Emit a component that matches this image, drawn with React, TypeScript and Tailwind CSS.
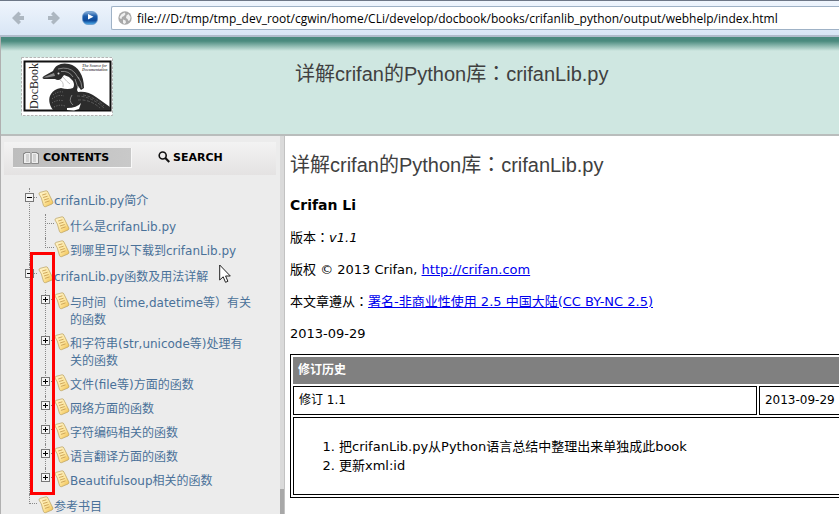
import type { ReactNode } from 'react';

const verdana = "font-['DejaVu_Sans','Noto_Sans_CJK_SC',sans-serif]";

function Colon() {
  return <span lang="zh-TW" className="font-['Noto_Sans_CJK_TC',sans-serif] leading-none">：</span>;
}

function Arrow({ flip = false }: { flip?: boolean }) {
  return (
    <svg viewBox="0 0 12 14" className={flip ? 'h-[14px] w-3 rotate-180' : 'h-[14px] w-3'} aria-hidden="true">
      <path d="M0 7 6.500.5 9 3 7.200 5H12v4H7.200L9 11l-2.500 2.500Z" fill="#adb7c1" />
    </svg>
  );
}

function PlayIcon() {
  return (
    <svg viewBox="0 0 16 14" className="h-[14px] w-4" aria-hidden="true">
      <defs>
        <linearGradient id="play" x1="0" y1="0" x2="0" y2="1">
          <stop offset="0" stopColor="#8fb4dc" />
          <stop offset="0.35" stopColor="#1c5cab" />
          <stop offset="0.7" stopColor="#0e4b9b" />
          <stop offset="1" stopColor="#4fb0ee" />
        </linearGradient>
      </defs>
      <rect x="0.5" y="0.5" width="15" height="13" rx="5.5" fill="url(#play)" stroke="#5f8fc4" strokeWidth="0.7" />
      <path d="M6 3 11.500 5.800 6 8.600Z" fill="#fff" />
    </svg>
  );
}

function GlobeIcon() {
  return (
    <svg viewBox="0 0 14 14" className="h-[14px] w-[14px] shrink-0" aria-hidden="true">
      <circle cx="7" cy="7" r="6.7" fill="#a9a9a9" />
      <path d="M1.500 6 3.500 3.200 6.500 1.500 7.500 3 6 5 4 6 3.500 8 2 7.500ZM8.500 4.500 10.500 3 12.500 6 12 9 10.500 10 9.500 8 8 7ZM5 8.500 7.500 9.500 8 11.500 6.500 13 5 12Z" fill="#f0f0f0" />
    </svg>
  );
}

function PageIcon() {
  return (
    <svg viewBox="0 0 16 18" className="mt-[2px] -mb-[2px] h-[18px] w-4 shrink-0" aria-hidden="true">
      <defs>
        <linearGradient id="page" x1="0" y1="0" x2="1" y2="1">
          <stop offset="0" stopColor="#fff5cf" />
          <stop offset="0.55" stopColor="#fde69f" />
          <stop offset="1" stopColor="#f0bb45" />
        </linearGradient>
      </defs>
      <path d="M1 4Q.8 2.800 2 2.400L8 .8Q9.300.6 9.900 2L14.900 12Q15.300 13.300 14 14L7.500 16.700Q6 17 5.500 15.600L3.300 8Z" fill="url(#page)" stroke="#b9a060" strokeWidth="0.7" />
      <path d="m4.200 5 4.200-1.200M5.100 7.500l4.500-1.300M6 10l4.700-1.500M6.900 12.400l4.700-1.500" stroke="#c9a053" strokeWidth="0.9" fill="none" />
    </svg>
  );
}

function BookIcon() {
  return (
    <svg viewBox="0 0 16 12" className="h-3 w-4" aria-hidden="true">
      <path d="M.5 1.500h1.500V.5h5l1 1 1-1h5v1h1.500v10H9l-1-.5-1 .5H.5Z" fill="#ededed" stroke="#777" strokeWidth="0.8" />
      <path d="M8 1.500v9.500" stroke="#777" />
      <path d="M3 3h3M3 5h3M3 7h3M3 9h3M10 3h3M10 5h3M10 7h3M10 9h3" stroke="#aaa" strokeWidth="0.8" />
    </svg>
  );
}

function SearchIcon() {
  return (
    <svg viewBox="0 0 12 12" className="h-3 w-3" aria-hidden="true">
      <circle cx="4.700" cy="4.500" r="3.500" fill="none" stroke="#111" strokeWidth="1.600" />
      <path d="m7.300 7 4 4" stroke="#111" strokeWidth="2.200" />
    </svg>
  );
}

function Logo() {
  return (
    <svg viewBox="0 0 92 60" className="h-[60px] w-[92px]" role="img" aria-label="DocBook">
      <rect x="0.500" y="0.500" width="91" height="58" fill="#fff" stroke="#b5b5b5" strokeDasharray="2.500 1.500" />
      <rect x="3.500" y="4.500" width="86" height="49" fill="#fff" stroke="#111" strokeWidth="2" />
      <text transform="translate(17 52) rotate(-90)" className="font-['Liberation_Serif',serif] text-[12px]" fill="#222">DocBook</text>
      <g className="font-['Liberation_Serif',serif] text-[4px] font-bold italic" fill="#555">
        <text x="61" y="10">The Source for</text>
        <text x="61" y="14">Documentation</text>
      </g>
      <path d="M32 53C28 48 27 41 30 37Q33 32 40 31Q47 33 52 31Q54 28 52 24L48 20 43 18 40 22Q37 24 34 22L23 22Q20 21 23 19L32 14C34 8 41 5 48 7 57 9 63 18 63 31L60 33 57 29 56 33 57 35Q67 34 75 40L89 50V53Z" fill="#2c2c2c" />
      <path d="M39 23Q43 25 42 30M42 20Q46 25 49 27" fill="none" stroke="#bbb" strokeWidth="0.900" />
      <path d="M57 20Q61 26 61 31M54 22 57 31" fill="none" stroke="#8d8d8d" strokeWidth="0.900" />
      <path d="M37 12Q48 9 54 16L58 22M40 14.500Q48 13.500 52 20" fill="none" stroke="#9b9b9b" strokeWidth="0.800" />
      <circle cx="37.500" cy="16.500" r="1" fill="#ddd" />
      <path d="M22 20.500 33 16 34 19 26 20.500Z" fill="#8a8a8a" />
      <path d="M46 51Q56 51 60 46L58 52 53 53.500 46 53Z" fill="#fff" />
      <path d="M32 38q5-4 10-3M31 42q6-5 12-3M31 46q6-4 12-2M33 50q6-3 11-1" fill="none" stroke="#777" strokeDasharray="1 1.500" />
      <path d="M51 38q-4 6 1 10" fill="none" stroke="#999" strokeWidth="0.800" />
      <path d="M56 39q14 0 27 12M62 38q12 2 21 11M57 43q12-1 22 8" fill="none" stroke="#666" strokeDasharray="3 1.500" strokeWidth="0.800" />
    </svg>
  );
}

type Toggle = 'plus' | 'minus' | 'none';

function TreeItem({ label, toggle = 'none', last = false, wide = false, children }: {
  label: ReactNode;
  toggle?: Toggle;
  last?: boolean;
  wide?: boolean;
  children?: ReactNode;
}) {
  return (
    <li className="relative">
      <span className={`absolute left-1 top-0 border-l border-dotted border-[#888] ${last ? 'h-[10px]' : 'h-full'}`} />
      <span className={`absolute left-1 top-[9px] border-t border-dotted border-[#888] ${wide ? 'w-[9px]' : 'w-2'}`} />
      {toggle !== 'none' && (
        <button aria-label={toggle === 'plus' ? 'Expand' : 'Collapse'} className="absolute left-0 top-[5px] block size-[9px] border border-[#777] bg-[#f4f4f4]">
          <svg viewBox="0 0 7 7" className="size-[7px]" aria-hidden="true">
            <path d={toggle === 'plus' ? 'M1 3.500h5M3.500 1v5' : 'M1 3.500h5'} stroke="#000" />
          </svg>
        </button>
      )}
      <div className="flex items-start pl-[13px]">
        <PageIcon />
        <a href="#" className="min-w-0 flex-1 pt-[5px] pb-[2px] leading-[17px] text-[#4a7199]">{label}</a>
      </div>
      {children}
    </li>
  );
}

function Branch({ children }: { children: ReactNode }) {
  return <ul className="ml-4 pt-[2px] pb-[2px]">{children}</ul>;
}

export default function App() {
  return (
    <div className={`flex h-screen flex-col overflow-hidden bg-white text-[13px] leading-[19px] text-black ${verdana}`}>
      <nav className="flex h-[37px] shrink-0 items-center border-t border-b-2 border-t-[#6d7787] border-b-[#b0bccb] bg-linear-to-b from-[#eff5fd] to-[#d9e6f5] pl-3">
        <button aria-label="Back"><Arrow /></button>
        <button aria-label="Forward" className="ml-6"><Arrow flip /></button>
        <button aria-label="Go" className="ml-[22px]"><PlayIcon /></button>
        <label className="ml-[13px] flex h-6 flex-1 items-center gap-[5px] rounded-l-[2px] border border-r-0 border-[#9fb2c6] bg-white pl-[6px]">
          <GlobeIcon />
          <input
            aria-label="Address"
            className="min-w-0 flex-1 bg-transparent font-['Open_Sans',sans-serif] text-[12px] outline-none"
            defaultValue="file:///D:/tmp/tmp_dev_root/cgwin/home/CLi/develop/docbook/books/crifanlib_python/output/webhelp/index.html"
          />
        </label>
      </nav>

      <div className="flex min-h-0 flex-1 flex-col border-l border-[#b0b0b0]">
        <header className="flex h-[99px] shrink-0 items-start border-b-2 border-[#b9bdbc] bg-[#cfe7e1] bg-[linear-gradient(#4a8a7e_0px,#4a8a7e_4px,#cfe7e1_14px)] pt-5 pl-5">
          <Logo />
          <h2 className="ml-[182px] pt-[5px] font-['Liberation_Sans','Noto_Sans_CJK_SC',sans-serif] text-[20px] leading-6 text-[#404040]">
            详解crifan的Python库<Colon />crifanLib.py
          </h2>
        </header>

        <div className="flex min-h-0 flex-1">
          <aside className="relative w-[279px] shrink-0 bg-[#ececec] pt-[6px] pl-[3px] text-[12px]">
            <div className="mr-1 flex h-[33px] items-start bg-linear-to-b from-[#f3f3f3] to-[#e4e2e2] pt-[6px] pl-[9px] text-[11px] font-bold">
              <button className="flex h-5 w-[119px] items-center gap-1 border-r border-b border-[#f8f8f8] bg-linear-to-r from-[#bdbdbd] to-[#c9c9c9] pl-[10px]">
                <BookIcon />CONTENTS
              </button>
              <button className="ml-[26px] flex h-[18px] items-center gap-[3px]">
                <SearchIcon />SEARCH
              </button>
            </div>
            <ul className="mt-[13px] mr-[27px] ml-[21px]">
              <TreeItem label="crifanLib.py简介" toggle="minus">
                <Branch>
                  <TreeItem wide label="什么是crifanLib.py" />
                  <TreeItem wide last label="到哪里可以下载到crifanLib.py" />
                </Branch>
              </TreeItem>
              <TreeItem label="crifanLib.py函数及用法详解" toggle="minus">
                <Branch>
                  <TreeItem wide toggle="plus" label="与时间（time,datetime等）有关的函数" />
                  <TreeItem wide toggle="plus" label="和字符串(str,unicode等)处理有关的函数" />
                  <TreeItem wide toggle="plus" label="文件(file等)方面的函数" />
                  <TreeItem wide toggle="plus" label="网络方面的函数" />
                  <TreeItem wide toggle="plus" label="字符编码相关的函数" />
                  <TreeItem wide toggle="plus" label="语言翻译方面的函数" />
                  <TreeItem wide last toggle="plus" label="Beautifulsoup相关的函数" />
                </Branch>
              </TreeItem>
              <TreeItem last label="参考书目" />
            </ul>
            <div className="pointer-events-none absolute top-[116px] left-[29px] h-[243px] w-[25px] border-[3px] border-[#ff0000]" />
            <svg viewBox="0 0 12 20" className="pointer-events-none absolute top-[128px] left-[218px] h-5 w-3" aria-hidden="true">
              <path d="M.7 1v15l3.500-3.200 2.300 5.500 2.400-1-2.300-5.300h4.700Z" fill="#fff" stroke="#222" />
            </svg>
          </aside>

          <div className="flex w-[5px] shrink-0 flex-col justify-end border-r border-[#c2c2c2] bg-[#dadada]">
            <div className="h-[25px] bg-[#a8a8a8]" />
          </div>

          <main className="min-w-0 flex-1 overflow-hidden pt-[17px] pl-[5px]">
            <h1 className="font-['Liberation_Sans','Noto_Sans_CJK_SC',sans-serif] text-[20px] leading-6 text-[#404040]">
              详解crifan的Python库<Colon />crifanLib.py
            </h1>
            <h3 className="mt-[19px] text-[14px] font-bold">Crifan Li</h3>
            <p className="mt-[13px]">版本<Colon /><em>v1.1</em></p>
            <p className="mt-[13px]">版权 © 2013 Crifan, <a href="http://crifan.com" className="text-[#0000ee] underline">http://crifan.com</a></p>
            <p className="mt-[13px]">本文章遵从<Colon /><a href="#" className="text-[#0000ee] underline">署名-非商业性使用 2.5 中国大陆(CC BY-NC 2.5)</a></p>
            <p className="mt-[13px]">2013-09-29</p>
            <table className="mt-[11px] w-[140%] table-fixed border-separate border-spacing-[2px] border border-black text-[12px] leading-[17px]">
              <colgroup>
                <col className="w-[61%]" />
                <col />
              </colgroup>
              <thead>
                <tr><th colSpan={2} className="bg-[#808080] p-[5px] text-left font-bold text-white">修订历史</th></tr>
              </thead>
              <tbody>
                <tr>
                  <td className="border border-black p-[5px]">修订 1.1</td>
                  <td className="border border-black p-[5px]">2013-09-29</td>
                </tr>
                <tr>
                  <td colSpan={2} className="border border-black p-[5px]">
                    <ol className="my-[14px] list-decimal pl-10 text-[13px] leading-[19px]">
                      <li>把crifanLib.py从Python语言总结中整理出来单独成此book</li>
                      <li>更新xml:id</li>
                    </ol>
                  </td>
                </tr>
              </tbody>
            </table>
          </main>
        </div>
      </div>
    </div>
  );
}
